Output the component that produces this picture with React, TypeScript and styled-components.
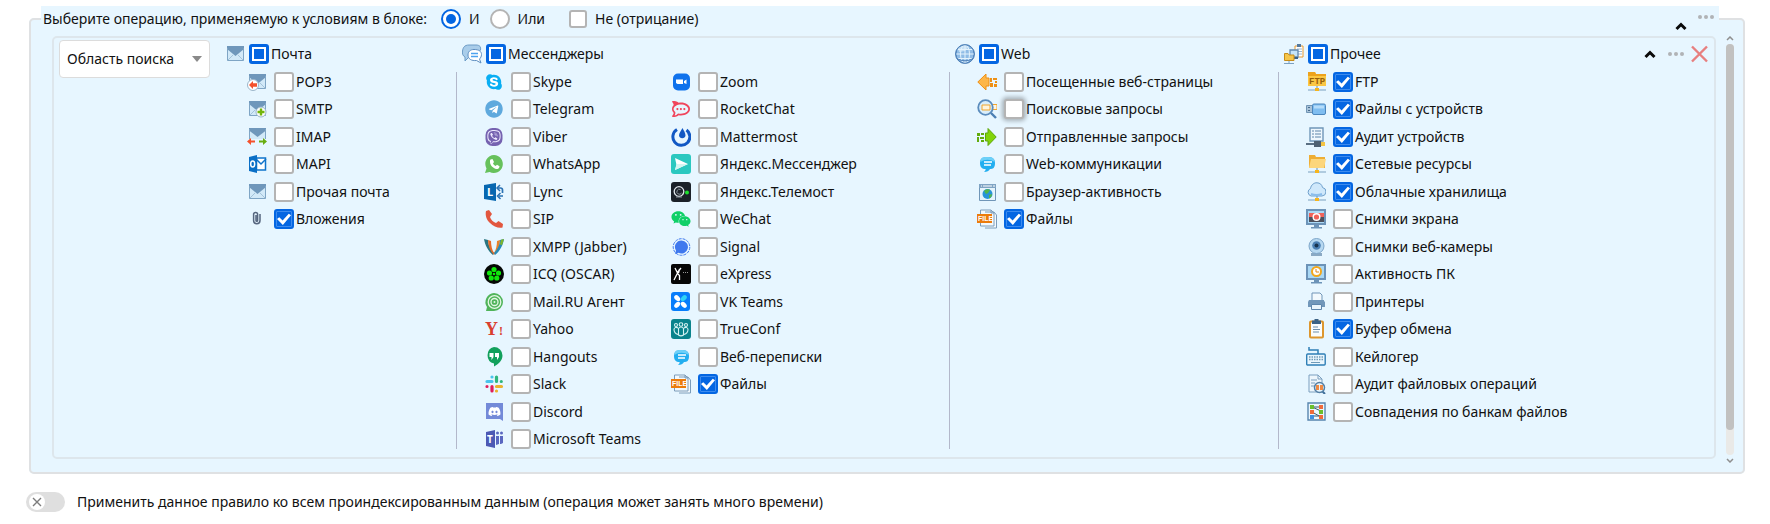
import React, { useEffect, useRef, useState } from "react";
import styled, { createGlobalStyle, css } from "styled-components";
import { FaSkype, FaTelegram, FaViber, FaDiscord, FaWeixin } from "react-icons/fa";
import { SiRocketdotchat } from "react-icons/si";

const GlobalStyle = createGlobalStyle`
  *, *::before, *::after { box-sizing: border-box; }
  body { margin: 0; background: #fff; }
  body, button, input, select {
    font-family: "Noto Sans", "Open Sans", sans-serif;
    font-size: 14px;
    line-height: 20px;
    color: #111;
  }
`;

const BLUE = "#0466e2";

/* ---------- layout ---------- */

const Page = styled.main`
  padding: 6px 25px 12px 26px;
`;

const RuleBlock = styled.fieldset`
  min-width: 0;
  margin: 0 0 0 3px;
  padding: 0 9px 0 10px;
  border: 2px solid #dfe1e3;
  border-radius: 5px;
  background: #e7f6ff;
`;

const RuleHeader = styled.legend`
  display: flex;
  align-items: center;
  width: calc(100% - 15px);
  height: 26px;
  padding: 0 4px 0 2px;
  background: #e7f6ff;
`;

const Prompt = styled.span`
  margin-right: 4px;
`;

const HeaderActions = styled.div`
  display: flex;
  align-self: stretch;
  align-items: flex-start;
  gap: 10px;
  margin-left: auto;
  padding-top: 6px;
`;

const Body = styled.div`
  display: flex;
  gap: 10px;
  padding: 4px 0 9px 11px;
`;

const Condition = styled.section`
  display: flex;
  flex: 1;
  min-width: 0;
  margin-bottom: 4px;
  padding: 2px 5px 8px;
  border: 2px solid #dde6ec;
  border-radius: 5px;
`;

const Groups = styled.div`
  display: grid;
  flex: 1;
  grid-template-columns: 237fr 493fr 329fr 361fr;
  min-width: 0;
  margin: 4px 5px 0 9px;
`;

const Group = styled.div`
  display: flex;
  flex-direction: column;
  gap: 8px;
  min-width: 0;
`;

const GroupHeader = styled.div`
  display: flex;
  align-items: center;
  gap: 4px;
  padding-left: 6px;
`;

const Lists = styled.div<{ $divided: boolean }>`
  display: flex;
  padding-left: 27px;
  border-left: 1px solid ${(p) => (p.$divided ? "#b3b8cb" : "transparent")};
`;

const List = styled.ul`
  display: grid;
  grid-template-rows: repeat(6, 27px 28px) 27px 20px;
  min-width: 187px;
  margin: 0;
  padding: 0;
  list-style: none;
`;

const Item = styled.li`
  display: flex;
  gap: 7px;
  height: 20px;
`;

const IconSlot = styled.svg`
  flex: none;
  width: 20px;
  height: 20px;
`;

/* ---------- controls ---------- */

const Label = styled.label`
  display: flex;
  align-items: center;
  gap: 2px;
  white-space: nowrap;
`;

const ModeLabel = styled(Label)<{ $wide?: boolean }>`
  gap: 8px;
  margin-left: ${(p) => (p.$wide ? 24 : 10)}px;
`;

const Tick = styled.input<{ $glow?: boolean; $small?: boolean }>`
  appearance: none;
  display: grid;
  flex: none;
  place-content: center;
  width: ${(p) => (p.$small ? 18 : 20)}px;
  height: ${(p) => (p.$small ? 18 : 20)}px;
  margin: 0;
  border: 2px solid #b4b4b4;
  border-radius: 3px;
  background: #fff;
  ${(p) =>
    p.$glow &&
    css`
      box-shadow: 0 0 4px 2px rgba(0, 0, 0, 0.28);
    `}

  &:checked {
    border-color: ${BLUE};
    background: ${BLUE};
    box-shadow: inset 0 0 0 1px #3d8bee;
  }
  &:checked::after {
    content: "";
    width: 14px;
    height: 12px;
    background: #fff;
    clip-path: polygon(0 50%, 16% 36%, 40% 62%, 84% 6%, 100% 18%, 42% 100%);
  }
  &:indeterminate {
    border: 3px solid ${BLUE};
  }
  &:indeterminate::after {
    content: "";
    width: 10px;
    height: 10px;
    background: ${BLUE};
  }
`;

const Radio = styled.input`
  appearance: none;
  display: grid;
  place-content: center;
  width: 20px;
  height: 20px;
  margin: 0;
  border: 2px solid #b4b4b4;
  border-radius: 50%;
  background: #fff;

  &:checked {
    border-color: ${BLUE};
  }
  &:checked::after {
    content: "";
    width: 10px;
    height: 10px;
    border-radius: 50%;
    background: ${BLUE};
  }
`;

const SelectBox = styled.div`
  position: relative;
  flex: none;
  width: 151px;
  height: 38px;
`;

const Select = styled.select`
  appearance: none;
  width: 100%;
  height: 100%;
  padding: 0 24px 0 7px;
  border: 1px solid #dcdcdc;
  border-radius: 4px;
  background: #fff;
`;

const SelectArrow = styled.svg`
  position: absolute;
  top: 16px;
  right: 8px;
  width: 10px;
  height: 6px;
  pointer-events: none;
`;

const Actions = styled.div`
  display: flex;
  flex: none;
  align-items: center;
  height: 28px;
  gap: 11px;
`;

const ActionPair = styled.div`
  display: flex;
  align-items: center;
  gap: 5px;
`;

const IconButton = styled.button<{ $low?: boolean }>`
  display: flex;
  margin: 0;
  margin-top: ${(p) => (p.$low ? 8 : 0)}px;
  padding: 0;
  border: 0;
  background: none;
`;

const Scrollbar = styled.div`
  display: flex;
  flex: none;
  flex-direction: column;
  align-items: center;
  gap: 3px;
  width: 8px;
`;

const Track = styled.div`
  flex: 1;
  width: 8px;
  border-radius: 4px;
  background: #e9e9e7;
`;

const Thumb = styled.div`
  height: 94%;
  border-radius: 4px;
  background: #c1c1c0;
`;

const ApplyRow = styled.label`
  display: flex;
  align-items: center;
  gap: 12px;
  margin-top: 18px;
`;

const Switch = styled.input`
  appearance: none;
  flex: none;
  width: 39px;
  height: 20px;
  margin: 0;
  border-radius: 10px;
  background: #dfdfdf;
`;

const SwitchBox = styled.span`
  position: relative;
  display: flex;
`;

const Knob = styled.svg`
  position: absolute;
  top: 2px;
  left: 3px;
  width: 16px;
  height: 16px;
  pointer-events: none;
`;

/* ---------- icons, each drawn on a 20 x 20 grid ---------- */

const Mail = () => (
  <>
    <path d="M2 2h17v15H2z" fill="#d2e9f8" />
    <path d="M2 2h17v3l-8.500 7L2 5z" fill="#6f97bb" />
    <path d="M2.500 4v12.500h16V4" fill="none" stroke="#7fa5c5" />
    <path d="M3 16l5-5M18 16l-5-5" stroke="#a3c3da" />
  </>
);

const File = () => (
  <>
    <path d="M8 3h9l2.500 3v13H8M3.500 1h10.500l3 3v13H3.500z" fill="#f3f9fd" stroke="#7b9cba" />
    <path d="M14 1v3h3" fill="none" stroke="#7b9cba" />
    <path d="M0 5h15v9H0z" fill="#ec7c0c" />
    <text x="1" y="12" fontSize="7" fontWeight="700" fontFamily="Liberation Sans, sans-serif" fill="#fff">
      FILE
    </text>
  </>
);

const Bubble = () => (
  <>
    <path d="M10 3c5 0 8 1 8 6s-2 6-5 6c-1 2-3 3-6 3 1-1 2-2 1.500-3C5 15 3 13 3 9s2-6 7-6z" fill="#22aef0" />
    <path d="M10 3c5 0 7.500 1 7.500 5-4-3-10-3-14 0C3.500 4 5 3 10 3z" fill="#6dd0f8" />
    <path d="M7 8h8M7 11h7" stroke="#fff" strokeWidth="1.500" />
  </>
);

const NetBase = () => (
  <>
    <path d="M2 18h18M11 14v4" stroke="#7ba0c0" strokeWidth="1.200" />
    <path d="M9 16h4v3H9z" fill="#f7b51c" />
  </>
);

const Monitor = () => (
  <>
    <path d="M1 1h18v14H1z" fill="#a9d8f5" stroke="#6c93b8" strokeWidth="2" />
    <path d="M8 16h5v2H8zM5 18h11v1.500H5z" fill="#6c93b8" />
  </>
);

const icons: Record<string, React.ReactNode> = {
  mail: <Mail />,
  pop3: (
    <>
      <Mail />
      <circle cx="6" cy="13" r="5.500" fill="#fff" stroke="#9ab5ca" />
      <path d="M2 13l4-4v2.200h4v3.600H6V17z" fill="#f4512c" />
    </>
  ),
  smtp: (
    <>
      <Mail />
      <circle cx="14" cy="13" r="5" fill="#fff" stroke="#9ab5ca" />
      <path d="M14 9.500v7M10.500 13h7" stroke="#72b50c" strokeWidth="2.400" />
    </>
  ),
  imap: (
    <>
      <path d="M2 1h17v11H2z" fill="#d2e9f8" />
      <path d="M2 1h17v2.500L10.500 10 2 3.500z" fill="#6f97bb" />
      <path d="M2.500 2v10M18.500 2v10" stroke="#7fa5c5" />
      <path d="M0 14.500l4-3.500v2.500h4v2H4V18z" fill="#f4512c" />
      <path d="M20 14.500l-4-3.500v2.500h-4v2h4V18z" fill="#68ad10" />
    </>
  ),
  mapi: (
    <>
      <path d="M9.500 4h9v12h-9z" fill="#fff" stroke="#0f74cb" strokeWidth="1.500" />
      <path d="M9 5l5 5 5-5" fill="none" stroke="#0f74cb" strokeWidth="1.500" />
      <path d="M2 3l8-2v18l-8-2z" fill="#0a6fc6" />
      <ellipse cx="5.700" cy="10" rx="2" ry="3" fill="none" stroke="#fff" strokeWidth="1.500" />
    </>
  ),
  clip: (
    <path
      d="M13 5v6.500a3.200 3.200 0 0 1-6.400 0V4.500M6.600 7V5.500a2 2 0 0 1 4 0v6a.8.8 0 0 1-1.600 0V6"
      fill="none"
      stroke="#56667f"
      strokeWidth="1.500"
    />
  ),
  chats: (
    <>
      <path d="M7 1h7c4 0 5 2 4.500 5L12 13H7l-4 4 0-4C1 12 0 10 .5 7S2 1 7 1z" fill="#a9cdea" stroke="#6d9cc6" />
      <path
        d="M12 5.500c5 0 7.500 2 7.500 5 0 2-1 3.500-2 4.500l1.500 4-4.500-2.500c-5 .5-8.500-1.500-8.500-5.500 0-3.500 2.500-5.500 6-5.500z"
        fill="#fff"
        stroke="#5c8dc0"
      />
      <path d="M9 9.500h7M9 12.500h7" stroke="#4da2ef" strokeWidth="1.500" />
    </>
  ),
  skype: (
    <>
      <circle cx="10" cy="10" r="6" fill="#fff" />
      <FaSkype x={1} y={1} size={18} color="#09aef3" />
    </>
  ),
  telegram: (
    <>
      <circle cx="10" cy="10" r="7" fill="#fff" />
      <FaTelegram x={1} y={1} size={18} color="#5fa9dd" />
    </>
  ),
  viber: (
    <>
      <rect x="1.500" y="1" width="17" height="18" rx="7" fill="#7562b0" />
      <FaViber x={3} y={3} size={14} color="#eeeaff" />
    </>
  ),
  whatsapp: (
    <>
      <path d="M10 1a9 9 0 1 1-4.300 17L1 19l1.500-4.500A9 9 0 0 1 10 1z" fill="#67c15c" />
      <path
        d="M6.500 5.500l2-.5 1.500 3-1 1.500c.5 1 1.500 2 2.700 2.500l1.300-1.300 2.500 1.500c0 2-1.500 2.800-3 2.800-3.500-.5-6.500-4-6.500-7 0-1 0-2 .5-2.500z"
        fill="#fff"
      />
    </>
  ),
  lync: (
    <>
      <path d="M13 6h3.500a2 2 0 0 1 2 2v3M19 14h-4" fill="none" stroke="#2a72b4" strokeWidth="1.700" />
      <path d="M16 3l-3 3 3 3M16.500 11l-3 3 3 3" fill="none" stroke="#2a72b4" strokeWidth="1.500" />
      <path d="M0 3l12-2v18L0 17z" fill="#0767b0" />
      <text x="3" y="14" fontSize="11" fontWeight="700" fill="#fff">
        L
      </text>
    </>
  ),
  sip: (
    <path
      d="M2 2l3-1 3 4-2 3c1 3 3 5 6 6l2.500-2 4.500 3-.5 3.500c-4 1-9-1-12.500-4.500C2.500 11 1 6 2 2z"
      fill="#e2573f"
    />
  ),
  xmpp: (
    <>
      <path d="M0 2l4 1c0 5 3 10 6 13l-1 2C4 14 1 8 0 2z" fill="#2a7580" />
      <path d="M4 3l3 1c0 4 1 9 3 12l0 2C6 14 4 9 4 3z" fill="#e66a28" />
      <path d="M16 3l-3 1c0 4-1 9-3 12l0 2c4-4 6-9 6-15z" fill="#e8832c" />
      <path d="M20 2l-4 1c0 5-3 10-6 13l1 2c5-4 8-10 9-16z" fill="#268bb8" />
      <path d="M20 2l-3 .7-1 4.500 2 1z" fill="#7fb52c" />
    </>
  ),
  icq: (
    <>
      <circle cx="10" cy="10" r="10" fill="#050805" />
      <g fill="#10e80c">
        <circle cx="10" cy="5.500" r="2.600" />
        <circle cx="5.500" cy="9" r="2.600" />
        <circle cx="14.500" cy="9" r="2.600" />
        <circle cx="7.200" cy="14" r="2.600" />
        <circle cx="12.800" cy="14" r="2.600" />
      </g>
      <circle cx="10" cy="10" r="1.300" fill="#10e80c" />
    </>
  ),
  agent: (
    <>
      <path d="M10 1a9 9 0 1 1 0 18H2l1-4a9 9 0 0 1 7-14z" fill="#50b45a" />
      <circle cx="10.500" cy="10" r="6.300" fill="none" stroke="#e4f7e5" strokeWidth="1.300" />
      <circle cx="10.500" cy="10" r="3.500" fill="none" stroke="#e4f7e5" strokeWidth="1.300" />
      <circle cx="10.500" cy="10" r="1" fill="#e4f7e5" />
    </>
  ),
  yahoo: (
    <>
      <text x="1" y="16" fontSize="18" fontWeight="700" fontFamily="Liberation Serif, serif" fill="#d9402f">
        Y
      </text>
      <text x="15" y="16" fontSize="12" fontWeight="700" fontFamily="Liberation Serif, serif" fill="#d9402f">
        !
      </text>
    </>
  ),
  hangouts: (
    <>
      <path d="M10 0a8.500 8.500 0 0 1 8.500 8.500c0 5-4 8.500-8.500 11v-3A8.500 8.500 0 0 1 10 0z" fill="#12a05c" />
      <path d="M5.500 6h4v4l-2 3v-3h-2zM11 6h4v4l-2 3v-3h-2z" fill="#fff" />
    </>
  ),
  slack: (
    <g strokeWidth="3.200" strokeLinecap="round" fill="none">
      <path d="M8 3h0M3 7.500h5" stroke="#49c4ec" />
      <path d="M12.500 3v4.500M17.300 7.500h0" stroke="#2eb67d" />
      <path d="M12.500 12.500h5M12.500 17h0" stroke="#ecb22e" />
      <path d="M8 12.500V17M3 12.500h0" stroke="#e01e5a" />
    </g>
  ),
  discord: (
    <>
      <path d="M2 1h17v18l-3-2H2z" fill="#738ad8" />
      <FaDiscord x={4} y={3} size={13} color="#fff" />
    </>
  ),
  teams: (
    <>
      <circle cx="13.500" cy="4" r="1.500" fill="#5a67c0" />
      <circle cx="17.500" cy="4" r="1.500" fill="#5a67c0" />
      <path d="M12 7h3v8l-3 1zM16 7h3v7l-2 1h-1z" fill="#5a67c0" />
      <path d="M2 3l9-2v18l-9-2z" fill="#4c59b4" />
      <text x="3" y="14" fontSize="10" fontWeight="700" fill="#fff">
        T
      </text>
    </>
  ),
  zoom: (
    <>
      <rect x="2" y="1.500" width="17" height="17" rx="5" fill="#0f72ec" />
      <path d="M5 7.500h7v4.500H6.500L5 11zM13 9l2.500-1.500V12L13 11z" fill="#fff" />
    </>
  ),
  rocket: <SiRocketdotchat x={1} y={1} size={18} color="#f0455c" />,
  mattermost: (
    <>
      <path d="M6 2.500A8.500 8.500 0 1 0 15.500 3" fill="none" stroke="#1158c4" strokeWidth="3" />
      <path d="M11.500 1c1 2 3 5 3 7.500a3.300 3.300 0 0 1-6.500 0C8 6 10 4 11.500 1z" fill="#1158c4" />
    </>
  ),
  yamess: (
    <>
      <rect width="20" height="20" rx="3" fill="#2bc8c0" />
      <path d="M4 4l13 6-13 6 1.500-5z" fill="#fff" />
      <path d="M5.500 10H17L4 16z" fill="#d3f6f2" />
    </>
  ),
  telemost: (
    <>
      <rect width="20" height="20" rx="3" fill="#1b2129" />
      <circle cx="8" cy="9.500" r="4.800" fill="none" stroke="#dfe5ea" strokeWidth="1.300" />
      <path d="M9.500 7.500a2.500 2.500 0 1 0 1 3.500M5 15h6" stroke="#8d969e" fill="none" />
      <circle cx="16" cy="10.500" r="2" fill="#1ce02c" />
    </>
  ),
  wechat: <FaWeixin x={0} y={0} size={20} color="#10d068" />,
  signal: (
    <>
      <circle cx="10.500" cy="10" r="8.300" fill="none" stroke="#3f78ee" strokeDasharray="3 1" />
      <path d="M10.500 3.500a6.500 6.500 0 1 1-3 12.300L4 17l1-3.500a6.500 6.500 0 0 1 5.500-10z" fill="#3f78ee" />
    </>
  ),
  express: (
    <>
      <rect width="20" height="20" rx="2" fill="#060606" />
      <path d="M4 4l2.500 5L3 16M6 9l2.500 2.500V16M6 9l4-5M8.500 5L7.500 9" stroke="#fff" strokeWidth="1.300" fill="none" />
      <path d="M12 8.500h6" stroke="#999" strokeDasharray="1 1" />
    </>
  ),
  vk: (
    <>
      <rect width="19" height="19" rx="3" fill="#087dfb" />
      <g fill="#fff">
        <ellipse cx="6.200" cy="6.200" rx="3.500" ry="2.300" transform="rotate(45 6.200 6.200)" />
        <ellipse cx="6.200" cy="12.800" rx="3.500" ry="2.300" transform="rotate(-45 6.200 12.800)" />
        <ellipse cx="12.800" cy="12.800" rx="3.500" ry="2.300" transform="rotate(45 12.800 12.800)" />
      </g>
      <ellipse cx="12.800" cy="6.200" rx="3.500" ry="2.300" transform="rotate(-45 12.800 6.200)" fill="#2fd3f5" />
    </>
  ),
  trueconf: (
    <>
      <rect width="20" height="20" rx="3" fill="#0a838c" />
      <g fill="none" stroke="#d6f3f2" strokeWidth="1.100">
        <circle cx="10" cy="5.500" r="1.800" />
        <circle cx="5" cy="6" r="1.500" />
        <circle cx="15" cy="6" r="1.500" />
        <path d="M7.500 16V9.500C9 7.500 11 7.500 12.500 9.500V16c-1.500 1-3.500 1-5 0zM7 9c-2-1.500-4 0-4 1.500 0 2 1 4 4 5M13 9c2-1.500 4 0 4 1.500 0 2-1 4-4 5" />
      </g>
    </>
  ),
  bubble: <Bubble />,
  file: <File />,
  globe: (
    <>
      <circle cx="10" cy="10" r="9.300" fill="#8fbce6" stroke="#4d80b8" />
      <path d="M3 4l6-3 5 2-4 4-6 1z" fill="#c5e0f5" />
      <g fill="none" stroke="#e4f3fd">
        <ellipse cx="10" cy="10" rx="4.500" ry="9" />
        <path d="M10 1v18M1 10h18M2.500 5.500h15M2.500 14.500h15" />
      </g>
      <circle cx="10" cy="10" r="9.300" fill="none" stroke="#4d80b8" />
      <path d="M2 14.500c5 3 11 3 16 0" fill="none" stroke="#4d80b8" />
    </>
  ),
  visited: (
    <>
      <path d="M.8 10L9 2v4h3v8H9v4z" fill="#fdb648" stroke="#ee9014" />
      <path d="M13 6h2v4h-2zM16 6h4v2h-4zM18 9h2v2h-2zM13 11h3v4h-3zM17 12h3v3h-3z" fill="#ee9014" />
    </>
  ),
  search: (
    <>
      <path d="M5 5.500h15v5H5z" fill="#fff6e2" stroke="#f1a52d" />
      <circle cx="8.500" cy="8.500" r="7.300" fill="#d9eefb" stroke="#5b8cbd" strokeWidth="1.800" />
      <path d="M5 6h8v5H5z" fill="#fff4dc" stroke="#f1a52d" />
      <path d="M14 14l5 5" stroke="#4c7fb3" strokeWidth="2.400" />
    </>
  ),
  sent: (
    <>
      <path d="M19.200 10L11 1.500V6H8.500v8H11v4.500z" fill="#82d40a" stroke="#5da60a" />
      <path d="M0 6h3v3H0zM4 6h3v2H4zM0 10h2v5H0zM3 10h4v2H3zM4 13h3v2H4z" fill="#62ac0d" />
    </>
  ),
  browser: (
    <>
      <path d="M2.500 2.500h16v16h-16z" fill="#e5f4fc" stroke="#7096b8" />
      <path d="M2 2h17v4H2z" fill="#7fa4c4" />
      <path d="M4 4h1M6 4h9M16 4h2" stroke="#fff" />
      <circle cx="10.500" cy="12" r="5" fill="#2794d8" />
      <path d="M7 9c2-2 5-2 6-1l-2 3-2 1zM12 13l3-1c0 2-1 4-3 4.500z" fill="#53b64a" />
    </>
  ),
  misc: (
    <>
      <path d="M11 2h8v11h-8z" fill="#fff" stroke="#e59a33" />
      <path d="M13 0h4v3h-4z" fill="#54799e" />
      <path d="M13 5h5M13 7.500h5M13 10h5" stroke="#9db9d0" />
      <path d="M6 6h8v7H6z" fill="#c5e4f8" stroke="#6288ad" strokeWidth="1.300" />
      <path d="M9 13h5v2H9z" fill="#3a6288" />
      <path d="M.5 9.500H4l1 1.500h5v5.500H.5z" fill="#f5c54a" stroke="#c78c18" />
      <path d="M0 19.500h10M5 17v2" stroke="#7ba0c0" />
    </>
  ),
  ftp: (
    <>
      <path d="M2 0h7l1 2h10v12H2z" fill="#fbc744" />
      <path d="M2 0h7l1 2h10v2H2z" fill="#eda31d" />
      <text x="3" y="12" fontSize="9" fontWeight="700" fontFamily="Liberation Mono, monospace" fill="#96600c">
        FTP
      </text>
      <NetBase />
    </>
  ),
  usb: (
    <>
      <path d="M.5 6.500h6v7h-6z" fill="#a8c2d8" stroke="#7195b5" />
      <path d="M2 8.500h2M2 11.500h2" stroke="#486c8c" />
      <rect x="6.500" y="5" width="13" height="10.500" rx="1.500" fill="#7fbdf0" stroke="#4b86bd" />
      <path d="M8 6.500h10v3H8z" fill="#b5dcfa" />
    </>
  ),
  audit: (
    <>
      <path d="M4 1h13v13H4z" fill="#eef7fd" stroke="#7096b8" strokeWidth="1.400" />
      <path d="M6 4h2M9 4h6M6 7h2M9 7h6M6 10h2M9 10h6" stroke="#5f86aa" />
      <path d="M0 17h9" stroke="#5a6f82" strokeWidth="2" />
      <path d="M8 14h7v6H8z" fill="#4f6172" />
      <path d="M15 15h4v4h-4z" fill="#f5c443" />
    </>
  ),
  network: (
    <>
      <path d="M3 1h6l1 2h9v11H3z" fill="#eeae35" />
      <path d="M5 5h15l-2 9H3z" fill="#fcd67c" />
      <NetBase />
    </>
  ),
  cloud: (
    <>
      <path
        d="M5 14a4 4 0 0 1-.5-7.500C5 3 8 .5 11 .8c3 0 5 2 5.500 4.700a4.300 4.300 0 0 1-.5 8.500z"
        fill="#cfe8fb"
        stroke="#6e9fcb"
      />
      <path d="M5 12c3 1 8 1 11 0" stroke="#8abdec" strokeWidth="2" fill="none" />
      <NetBase />
    </>
  ),
  screenshot: (
    <>
      <Monitor />
      <path d="M3 4h15v4H3z" fill="#f0625a" />
      <path d="M3 8h15v5H3z" fill="#4b4f5c" />
      <circle cx="10.500" cy="8" r="3.300" fill="#f0625a" stroke="#fff" strokeWidth="1.400" />
    </>
  ),
  webcam: (
    <>
      <path d="M5 16h11v3H5z" fill="#8aa9c4" />
      <circle cx="10.500" cy="9" r="7.500" fill="#b6d8f1" stroke="#7ea6c9" />
      <circle cx="10.500" cy="8.500" r="4.300" fill="#4b80b4" />
      <circle cx="10.500" cy="8.500" r="2" fill="#17334f" />
    </>
  ),
  activity: (
    <>
      <Monitor />
      <circle cx="10.500" cy="7.500" r="4.500" fill="#fff" stroke="#f3a71c" strokeWidth="2" />
      <path d="M10 5v3h3" fill="none" stroke="#e1861b" />
    </>
  ),
  printer: (
    <>
      <path d="M6 1h8l2 2v7H6z" fill="#f2f9fd" stroke="#7095b7" />
      <path d="M3 8h15v1l1 1v5H2v-5z" fill="#7197ba" />
      <path d="M5.500 12.500h10v5h-10z" fill="#eaf5fc" stroke="#5e86ac" />
    </>
  ),
  clipboard: (
    <>
      <rect x="4" y="2.500" width="13" height="16" rx="1" fill="#fafcfd" stroke="#dd962e" strokeWidth="2" />
      <path d="M6 4V1.500h2.500V0h4v1.500H15V5H6z" fill="#3c6285" />
      <path d="M7 8h5M7 10.500h7M7 13h6" stroke="#6f8fac" />
    </>
  ),
  keyboard: (
    <>
      <path d="M3 0v3h9v4" fill="none" stroke="#2f7fb6" strokeWidth="1.500" />
      <rect x=".7" y="7" width="18.500" height="11" rx="1" fill="#eaf6fd" stroke="#2f7fb6" strokeWidth="1.400" />
      <path d="M3 10h14M3 12.500h14" stroke="#6f9ab8" strokeWidth="1.500" strokeDasharray="1.500 1" />
      <path d="M5 15.500h9" stroke="#6f9ab8" />
    </>
  ),
  fileaudit: (
    <>
      <path d="M3 1h9l4 4v13H3z" fill="#edf6fc" stroke="#7b9fbf" />
      <path d="M12 1v4h4M5 6h6M5 9h4M5 12h3" fill="none" stroke="#7b9fbf" />
      <path d="M16 17l3 3" stroke="#40709b" strokeWidth="2" />
      <circle cx="13.500" cy="13.500" r="5" fill="#e8f4fb" stroke="#547fa5" strokeWidth="1.500" />
      <path d="M10 11h3v5h-3zM14 11h3v5h-3z" fill="#ee8a45" />
    </>
  ),
  banks: (
    <>
      <path d="M2 1h17v17H2z" fill="#eaf6fd" stroke="#5885ae" strokeWidth="1.400" />
      <path d="M6 5l9 4M6 10l9 5M6 14h8M6 5h8" stroke="#3f5b70" />
      <path d="M4 3h4v4H4zM13 8h4v4h-4z" fill="#6abf2c" />
      <path d="M4 8h4v4H4zM13 13h4v4h-4zM13 3h4v4h-4z" fill="#ef6a3b" />
      <path d="M4 13h4v4H4z" fill="#3f8fe0" />
    </>
  ),
};

const Icon = ({ name }: { name: string }) => (
  <IconSlot viewBox="0 0 20 20" aria-hidden="true">
    {icons[name]}
  </IconSlot>
);

const Chevron = ({ down, small }: { down?: boolean; small?: boolean }) => (
  <svg width={small ? 8 : 12} height={small ? 5 : 12} viewBox={small ? "0 0 8 5" : "0 0 12 12"} aria-hidden="true">
    {small ? (
      <path d={down ? "M1 1l3 3 3-3" : "M1 4l3-3 3 3"} fill="none" stroke="#8f8f8f" strokeWidth="1.500" />
    ) : (
      <path d="M1.500 9L6 4.500 10.500 9" fill="none" stroke="#0a0a0a" strokeWidth="3" />
    )}
  </svg>
);

const Dots = () => (
  <svg width="18" height="10" viewBox="0 0 18 10" fill="#b0b3b6" aria-hidden="true">
    <circle cx="3" cy="5" r="2" />
    <circle cx="9" cy="5" r="2" />
    <circle cx="15" cy="5" r="2" />
  </svg>
);

/* ---------- data ---------- */

type Entry = { icon: string; label: string; checked?: boolean; glow?: boolean };
type Section = { icon: string; title: string; lists: Entry[][] };

const sections: Section[] = [
  {
    icon: "mail",
    title: "Почта",
    lists: [
      [
        { icon: "pop3", label: "POP3" },
        { icon: "smtp", label: "SMTP" },
        { icon: "imap", label: "IMAP" },
        { icon: "mapi", label: "MAPI" },
        { icon: "mail", label: "Прочая почта" },
        { icon: "clip", label: "Вложения", checked: true },
      ],
    ],
  },
  {
    icon: "chats",
    title: "Мессенджеры",
    lists: [
      [
        { icon: "skype", label: "Skype" },
        { icon: "telegram", label: "Telegram" },
        { icon: "viber", label: "Viber" },
        { icon: "whatsapp", label: "WhatsApp" },
        { icon: "lync", label: "Lync" },
        { icon: "sip", label: "SIP" },
        { icon: "xmpp", label: "XMPP (Jabber)" },
        { icon: "icq", label: "ICQ (OSCAR)" },
        { icon: "agent", label: "Mail.RU Агент" },
        { icon: "yahoo", label: "Yahoo" },
        { icon: "hangouts", label: "Hangouts" },
        { icon: "slack", label: "Slack" },
        { icon: "discord", label: "Discord" },
        { icon: "teams", label: "Microsoft Teams" },
      ],
      [
        { icon: "zoom", label: "Zoom" },
        { icon: "rocket", label: "RocketChat" },
        { icon: "mattermost", label: "Mattermost" },
        { icon: "yamess", label: "Яндекс.Мессенджер" },
        { icon: "telemost", label: "Яндекс.Телемост" },
        { icon: "wechat", label: "WeChat" },
        { icon: "signal", label: "Signal" },
        { icon: "express", label: "eXpress" },
        { icon: "vk", label: "VK Teams" },
        { icon: "trueconf", label: "TrueConf" },
        { icon: "bubble", label: "Веб-переписки" },
        { icon: "file", label: "Файлы", checked: true },
      ],
    ],
  },
  {
    icon: "globe",
    title: "Web",
    lists: [
      [
        { icon: "visited", label: "Посещенные веб-страницы" },
        { icon: "search", label: "Поисковые запросы", glow: true },
        { icon: "sent", label: "Отправленные запросы" },
        { icon: "bubble", label: "Web-коммуникации" },
        { icon: "browser", label: "Браузер-активность" },
        { icon: "file", label: "Файлы", checked: true },
      ],
    ],
  },
  {
    icon: "misc",
    title: "Прочее",
    lists: [
      [
        { icon: "ftp", label: "FTP", checked: true },
        { icon: "usb", label: "Файлы с устройств", checked: true },
        { icon: "audit", label: "Аудит устройств", checked: true },
        { icon: "network", label: "Сетевые ресурсы", checked: true },
        { icon: "cloud", label: "Облачные хранилища", checked: true },
        { icon: "screenshot", label: "Снимки экрана" },
        { icon: "webcam", label: "Снимки веб-камеры" },
        { icon: "activity", label: "Активность ПК" },
        { icon: "printer", label: "Принтеры" },
        { icon: "clipboard", label: "Буфер обмена", checked: true },
        { icon: "keyboard", label: "Кейлогер" },
        { icon: "fileaudit", label: "Аудит файловых операций" },
        { icon: "banks", label: "Совпадения по банкам файлов" },
      ],
    ],
  },
];

const MixedTick = ({ title }: { title: string }) => {
  const ref = useRef<HTMLInputElement>(null);
  useEffect(() => {
    if (ref.current) ref.current.indeterminate = true;
  }, []);
  return (
    <Label>
      <Tick ref={ref} type="checkbox" />
      {title}
    </Label>
  );
};

const SourceGroup = ({ section, divided }: { section: Section; divided: boolean }) => (
  <Group>
    <GroupHeader>
      <Icon name={section.icon} />
      <MixedTick title={section.title} />
    </GroupHeader>
    <Lists $divided={divided}>
      {section.lists.map((list, i) => (
        <List key={i}>
          {list.map((entry) => (
            <Item key={entry.label}>
              <Icon name={entry.icon} />
              <Label>
                <Tick type="checkbox" defaultChecked={entry.checked} $glow={entry.glow} />
                {entry.label}
              </Label>
            </Item>
          ))}
        </List>
      ))}
    </Lists>
  </Group>
);

export default function App() {
  const [mode, setMode] = useState("and");
  return (
    <Page>
      <GlobalStyle />
      <RuleBlock>
        <RuleHeader>
          <Prompt>Выберите операцию, применяемую к условиям в блоке:</Prompt>
          <ModeLabel>
            <Radio type="radio" name="mode" checked={mode === "and"} onChange={() => setMode("and")} />
            И
          </ModeLabel>
          <ModeLabel>
            <Radio type="radio" name="mode" checked={mode === "or"} onChange={() => setMode("or")} />
            Или
          </ModeLabel>
          <ModeLabel $wide>
            <Tick type="checkbox" $small />
            Не (отрицание)
          </ModeLabel>
          <HeaderActions>
            <IconButton type="button" aria-label="Свернуть блок" $low>
              <Chevron />
            </IconButton>
            <IconButton type="button" aria-label="Меню блока">
              <Dots />
            </IconButton>
          </HeaderActions>
        </RuleHeader>
        <Body>
          <Condition>
            <SelectBox>
              <Select aria-label="Тип условия" defaultValue="area">
                <option value="area">Область поиска</option>
              </Select>
              <SelectArrow viewBox="0 0 10 6" aria-hidden="true">
                <path d="M0 0h10L5 6z" fill="#8a8a8a" />
              </SelectArrow>
            </SelectBox>
            <Groups>
              {sections.map((section, i) => (
                <SourceGroup key={section.title} section={section} divided={i > 0} />
              ))}
            </Groups>
            <Actions>
              <IconButton type="button" aria-label="Свернуть условие">
                <Chevron />
              </IconButton>
              <ActionPair>
                <IconButton type="button" aria-label="Меню условия">
                  <Dots />
                </IconButton>
                <IconButton type="button" aria-label="Удалить условие">
                  <svg width="19" height="18" viewBox="0 0 19 18" aria-hidden="true">
                    <path d="M2 1.500l15 15M17 1.500l-15 15" stroke="#e77f7f" strokeWidth="2.400" />
                  </svg>
                </IconButton>
              </ActionPair>
            </Actions>
          </Condition>
          <Scrollbar>
            <Chevron small />
            <Track>
              <Thumb />
            </Track>
            <Chevron small down />
          </Scrollbar>
        </Body>
      </RuleBlock>
      <ApplyRow>
        <SwitchBox>
          <Switch type="checkbox" role="switch" />
          <Knob viewBox="0 0 16 16" aria-hidden="true">
            <circle cx="8" cy="8" r="8" fill="#fff" />
            <path d="M4 4l8 8M12 4l-8 8" stroke="#7c7c7c" strokeWidth="1.400" />
          </Knob>
        </SwitchBox>
        Применить данное правило ко всем проиндексированным данным (операция может занять много времени)
      </ApplyRow>
    </Page>
  );
}
